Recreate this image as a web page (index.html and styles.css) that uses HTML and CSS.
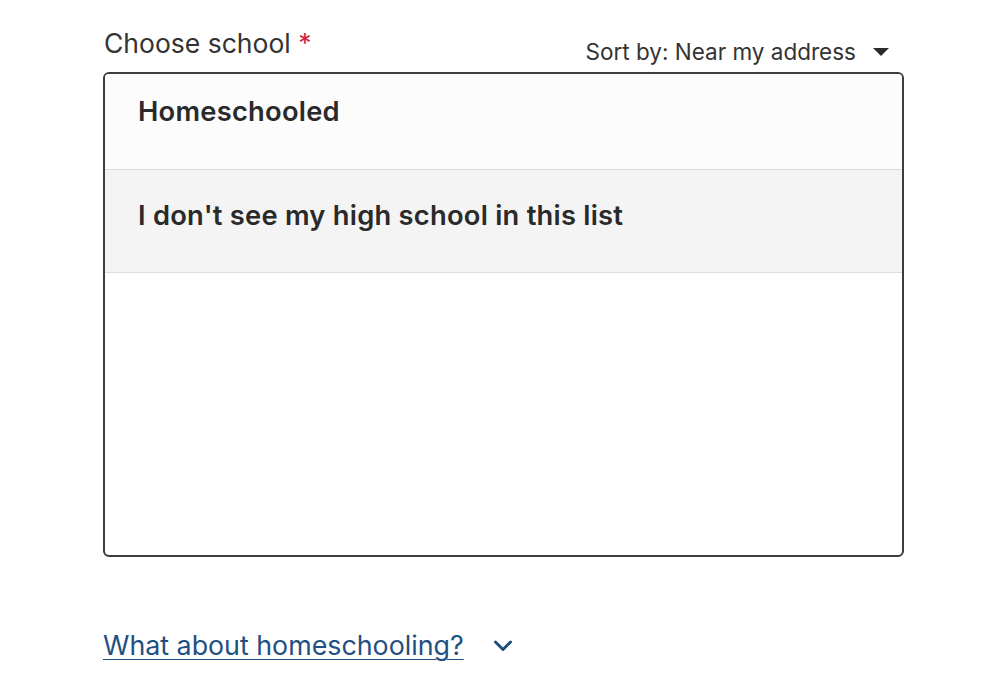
FILE: index.html
```html
<!DOCTYPE html>
<html lang="en">
<head>
<meta charset="utf-8">
<title>Choose school</title>
<link rel="stylesheet" href="styles.css">
</head>
<body>
<div class="page">
  <div class="field-head">
    <label class="field-label">Choose school <span class="req">*</span></label>
    <button class="sort">Sort by: Near my address
      <svg class="sort-caret" width="18" height="10" viewBox="0 0 18 10"><path d="M1 1h16L9 9z" fill="#2b2b2b"/></svg>
    </button>
  </div>
  <div class="school-list">
    <div class="option option-first">Homeschooled</div>
    <div class="option option-second">I don't see my high school in this list</div>
  </div>
  <div class="help">
    <a class="help-link" href="#">What about homeschooling?</a>
    <svg class="help-chevron" width="22" height="16" viewBox="0 0 22 16"><path d="M3.5 4l7.5 7.5L18.5 4" fill="none" stroke="#1f4f7c" stroke-width="3" stroke-linecap="round" stroke-linejoin="round"/></svg>
  </div>
</div>
</body>
</html>
```

FILE: styles.css
```css
html, body {
  margin: 0;
  padding: 0;
  background: #ffffff;
}

body {
  font-family: Inter, "Noto Sans", sans-serif;
  color: #2f2f2f;
}

.page {
  width: 801px;
  padding: 27px 0 0 103px;
}

.field-head {
  display: flex;
  justify-content: space-between;
  align-items: flex-start;
  height: 45px;
}

.field-label {
  font-size: 26.5px;
  line-height: 32px;
  color: #333333;
  padding-left: 1px;
}

.req {
  color: #d0263a;
}

.sort {
  display: flex;
  align-items: center;
  gap: 16px;
  margin-top: 13px;
  border: 0;
  background: none;
  padding: 0 14px 0 0;
  font-family: inherit;
  font-size: 22.5px;
  line-height: 24px;
  color: #333333;
  cursor: pointer;
}

.sort-caret {
  display: block;
  margin-top: 0;
}

.school-list {
  height: 481px;
  border: 2px solid #3d3d3d;
  border-radius: 6px;
  overflow: hidden;
  background: #ffffff;
}

.option {
  padding-left: 33px;
  font-size: 27.3px;
  line-height: 32px;
  font-weight: 600;
  letter-spacing: 0.25px;
  color: #2a2a2a;
  border-bottom: 1px solid #dcdcdc;
  box-sizing: border-box;
}

.option-first {
  height: 96px;
  padding-top: 22px;
  background: #fcfcfc;
}

.option-second {
  height: 103px;
  padding-top: 30px;
  background: #f4f4f4;
}

.help {
  display: flex;
  align-items: center;
  gap: 28px;
  margin-top: 72px;
}

.help-link {
  font-size: 26.8px;
  line-height: 32px;
  color: #1f5082;
  text-decoration: underline;
  text-decoration-thickness: 1px;
  text-underline-offset: 4px;
}

.help-chevron {
  display: block;
  margin-top: 2px;
}
```
